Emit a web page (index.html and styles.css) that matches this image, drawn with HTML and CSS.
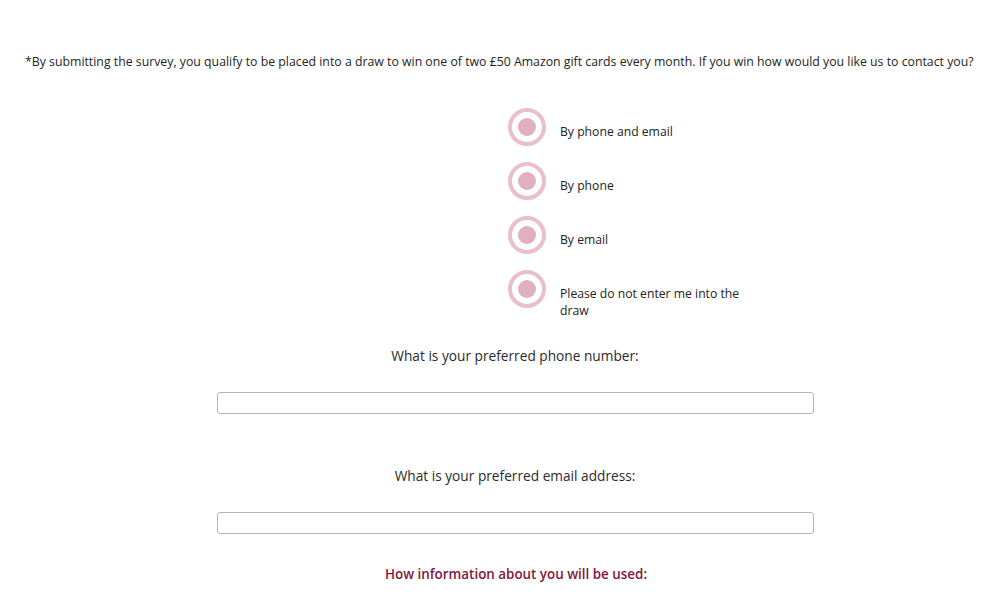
FILE: index.html
```
<!DOCTYPE html>
<html>
<head>
<meta charset="utf-8">
<link rel="stylesheet" href="styles.css">
</head>
<body>
<div class="page">
  <p class="intro">*By submitting the survey, you qualify to be placed into a draw to win one of two £50 Amazon gift cards every month. If you win how would you like us to contact you?</p>
  <div class="options">
    <label class="option"><span class="radio"><span class="dot"></span></span><span class="label">By phone and email</span></label>
    <label class="option"><span class="radio"><span class="dot"></span></span><span class="label">By phone</span></label>
    <label class="option"><span class="radio"><span class="dot"></span></span><span class="label">By email</span></label>
    <label class="option"><span class="radio"><span class="dot"></span></span><span class="label">Please do not enter me into the draw</span></label>
  </div>
  <div class="field">
    <div class="question">What is your preferred phone number:</div>
    <input class="text-input" type="text">
  </div>
  <div class="field second">
    <div class="question">What is your preferred email address:</div>
    <input class="text-input" type="text">
  </div>
  <div class="info">How information about you will be used:</div>
</div>
</body>
</html>
```
FILE: styles.css
```
html, body {
  margin: 0;
  padding: 0;
  background: #ffffff;
}
body {
  font-family: "Open Sans", "Liberation Sans", sans-serif;
  color: #222222;
}
.page {
  width: 1000px;
  padding-top: 53px;
  display: flex;
  flex-direction: column;
}
.intro {
  margin: 0;
  padding-left: 25px;
  font-size: 12.3px;
  line-height: 18px;
  color: #1e1e1e;
  white-space: nowrap;
}
.options {
  margin-top: 37px;
  margin-left: 508px;
  display: flex;
  flex-direction: column;
  gap: 16px;
}
.option {
  display: flex;
  align-items: flex-start;
  gap: 14px;
  height: 38px;
}
.radio {
  flex: none;
  width: 30px;
  height: 30px;
  border: 4px solid #e9bfcd;
  border-radius: 50%;
  display: flex;
  align-items: center;
  justify-content: center;
  background: #fff;
}
.dot {
  width: 18px;
  height: 18px;
  border-radius: 50%;
  background: #e0b0c0;
}
.label {
  font-size: 12.2px;
  line-height: 17px;
  color: #222;
  width: 200px;
  padding-top: 15px;
}
.field {
  margin-top: 38px;
  display: flex;
  flex-direction: column;
  align-items: center;
  width: 1030px;
}
.field.second {
  margin-top: 52px;
}
.question {
  font-size: 13.7px;
  line-height: 20px;
  color: #2a2a2a;
}
.text-input {
  margin-top: 26px;
  width: 597px;
  height: 22px;
  box-sizing: border-box;
  border: 1px solid #b5b5b5;
  border-radius: 3px;
  background: #fff;
  padding: 0;
}
.info {
  margin-top: 30px;
  width: 1032px;
  text-align: center;
  font-size: 13.4px;
  line-height: 20px;
  font-weight: 600;
  color: #84173a;
}
```
